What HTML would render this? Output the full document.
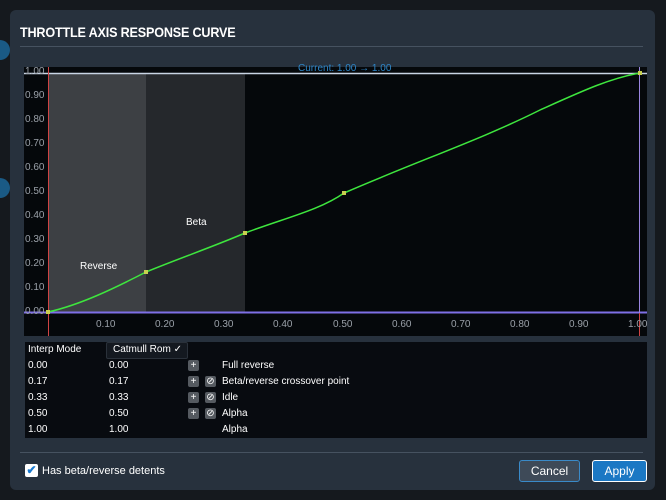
<!DOCTYPE html>
<html><head><style>
body{margin:0;width:666px;height:500px;background:#15191e;overflow:hidden;font-family:"Liberation Sans",sans-serif;position:relative}
.dlg{position:absolute;left:10px;top:10px;width:645px;height:480px;background:#27313d;border-radius:6px}
.t{position:absolute;left:10px;top:14px;color:#fff;font-size:14px;font-weight:bold;letter-spacing:-0.2px;transform:scaleX(0.9);transform-origin:left}
.sep{position:absolute;left:10px;width:498px;height:1px;background:#465260}
.tbl{position:absolute;left:15px;top:332px;width:622px;height:96px;background:#080b10}
.r{position:absolute;color:#fff;font-size:10px}
.btn{position:absolute;height:22px;border-radius:3px;color:#fff;font-size:12px;text-align:center;line-height:20px;box-sizing:border-box}
.ic{position:absolute;width:11px;height:11px;background:#555a60;border-radius:2px;color:#fff;font-size:10px;line-height:11px;text-align:center}
</style></head><body>
<div style="position:absolute;left:0;top:40px;width:10px;height:20px;background:#1a5a85;border-radius:0 10px 10px 0"></div>
<div style="position:absolute;left:0;top:178px;width:10px;height:20px;background:#1a5a85;border-radius:0 10px 10px 0"></div>
<div class="dlg">
<div class="t">THROTTLE AXIS RESPONSE CURVE</div>
<div class="sep" style="top:36px;width:623px"></div>
<div class="sep" style="top:442px;width:623px"></div>
<div class="tbl"></div>
</div>
<svg style="position:absolute;left:0;top:0" width="666" height="500">
<rect x="24" y="67" width="623" height="269" fill="#05080b"/>
<rect x="48" y="73" width="98" height="240" fill="#3d4044"/>
<rect x="146" y="73" width="99" height="240" fill="#25282c"/>
<line x1="24" y1="73.5" x2="647" y2="73.5" stroke="#c8d4e4" stroke-width="1.5"/>
<line x1="24" y1="312.5" x2="647" y2="312.5" stroke="#7e6fe6" stroke-width="2"/>
<line x1="48.5" y1="67" x2="48.5" y2="336" stroke="#d04444" stroke-width="1"/>
<line x1="639.5" y1="67" x2="639.5" y2="313" stroke="#9b86e0" stroke-width="1"/>
<line x1="639.5" y1="313" x2="639.5" y2="336" stroke="#d04444" stroke-width="1"/>
<path d="M48,312 C80,305 115,288 146,272 C180,258 215,246 245,233 C285,218 320,210 344,193 C420,160 480,140 540,110 C580,92 610,78 640,73" fill="none" stroke="#3ee53e" stroke-width="1.5"/>
<g fill="#c8d050"><rect x="46" y="310" width="4" height="4"/><rect x="144" y="270" width="4" height="4"/><rect x="243" y="231" width="4" height="4"/><rect x="342" y="191" width="4" height="4"/><rect x="638" y="71" width="4" height="4"/></g>
<g fill="#9aa0a8" font-size="10" font-family="Liberation Sans">
<text x="25" y="74">1.00</text><text x="25" y="98">0.90</text><text x="25" y="122">0.80</text><text x="25" y="146">0.70</text><text x="25" y="170">0.60</text><text x="25" y="194">0.50</text><text x="25" y="218">0.40</text><text x="25" y="242">0.30</text><text x="25" y="266">0.20</text><text x="25" y="290">0.10</text><text x="25" y="314">0.00</text>
<text x="96" y="327">0.10</text><text x="155" y="327">0.20</text><text x="214" y="327">0.30</text><text x="273" y="327">0.40</text><text x="333" y="327">0.50</text><text x="392" y="327">0.60</text><text x="451" y="327">0.70</text><text x="510" y="327">0.80</text><text x="569" y="327">0.90</text><text x="628" y="327">1.00</text>
</g>
<text x="298" y="71" fill="#2e86c8" font-size="10" font-family="Liberation Sans">Current: 1.00 → 1.00</text>
<text x="80" y="269" fill="#fff" font-size="10" font-family="Liberation Sans">Reverse</text>
<text x="186" y="225" fill="#fff" font-size="10" font-family="Liberation Sans">Beta</text>
</svg>
<div style="position:absolute;left:106px;top:342px;width:80px;height:15px;background:#141920;border:1px solid #2a313a;border-radius:2px"></div>
<div class="r" style="left:28px;top:344px">Interp Mode</div><div class="r" style="left:113px;top:344px">Catmull Rom ✓</div>
<div class="r" style="left:28px;top:360px">0.00</div><div class="r" style="left:109px;top:360px">0.00</div><div class="r" style="left:222px;top:360px">Full reverse</div>
<div class="r" style="left:28px;top:376px">0.17</div><div class="r" style="left:109px;top:376px">0.17</div><div class="r" style="left:222px;top:376px">Beta/reverse crossover point</div>
<div class="r" style="left:28px;top:392px">0.33</div><div class="r" style="left:109px;top:392px">0.33</div><div class="r" style="left:222px;top:392px">Idle</div>
<div class="r" style="left:28px;top:408px">0.50</div><div class="r" style="left:109px;top:408px">0.50</div><div class="r" style="left:222px;top:408px">Alpha</div>
<div class="r" style="left:28px;top:424px">1.00</div><div class="r" style="left:109px;top:424px">1.00</div><div class="r" style="left:222px;top:424px">Alpha</div>
<div class="ic" style="left:188px;top:360px">+</div>
<div class="ic" style="left:188px;top:376px">+</div><div class="ic" style="left:205px;top:376px">⊘</div>
<div class="ic" style="left:188px;top:392px">+</div><div class="ic" style="left:205px;top:392px">⊘</div>
<div class="ic" style="left:188px;top:408px">+</div><div class="ic" style="left:205px;top:408px">⊘</div>
<div style="position:absolute;left:25px;top:464px;width:13px;height:13px;background:#fff;border-radius:2px;color:#1a7ad0;font-size:12px;line-height:13px;text-align:center;font-weight:bold">✔</div>
<div class="r" style="left:42px;top:465px;font-size:11px">Has beta/reverse detents</div>
<div class="btn" style="left:519px;top:460px;width:61px;background:#3e4a58;border:1px solid #3a8ac8">Cancel</div>
<div class="btn" style="left:592px;top:460px;width:55px;background:#1b78c4;border:1px solid #fff">Apply</div>
</body></html>
